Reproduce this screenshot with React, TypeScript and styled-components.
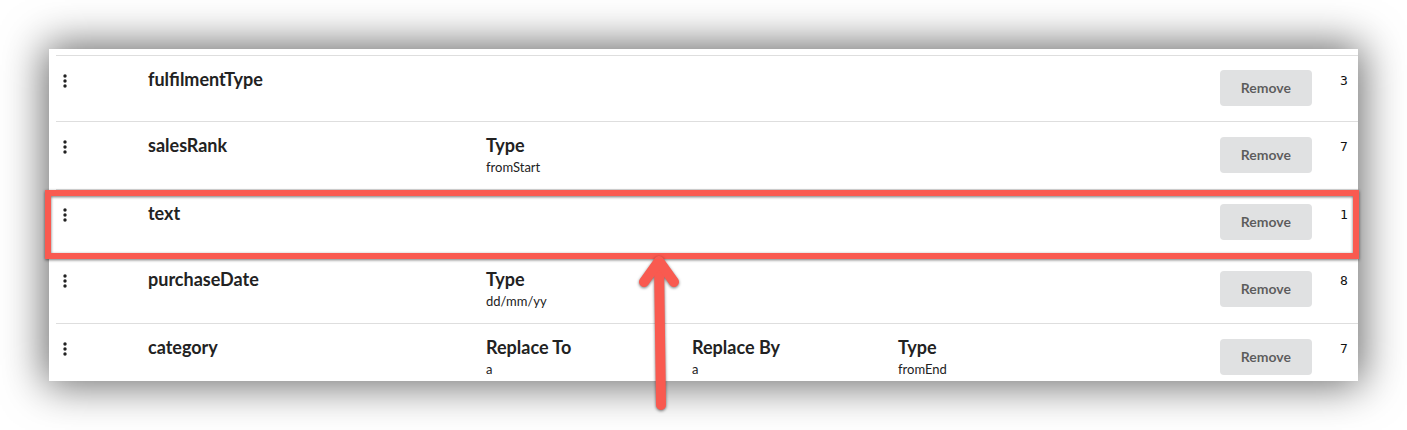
import React from "react";
import styled, { createGlobalStyle } from "styled-components";

const GlobalStyle = createGlobalStyle`
  html, body { margin: 0; padding: 0; background: #ffffff; }
  body { font-family: Lato, "Open Sans", Arial, sans-serif; color: rgba(0,0,0,0.87); }
  * { box-sizing: border-box; }
`;

const Page = styled.div`
  position: relative;
  width: 1407px;
  height: 430px;
  overflow: hidden;
  padding: 49px 0 0 49px;
`;

const Card = styled.div`
  width: 1309px;
  height: 332px;
  background: #ffffff;
  overflow: hidden;
  box-shadow: 0 0 40px 4px rgba(0, 0, 0, 0.6);
  padding: 6px 0 0 7px;
`;

const Table = styled.div`
  display: flex;
  flex-direction: column;
`;

const Row = styled.div<{ $tall?: boolean }>`
  display: grid;
  grid-template-columns: 86px 338px 1fr auto 46px;
  min-height: ${(p) => (p.$tall ? 68 : 66)}px;
  border-top: 1px solid #dedede;
  padding-left: 6px;
`;

const HandleCell = styled.div`
  padding-top: 18px;
  color: #222;
`;

const NameCell = styled.div`
  padding-top: 13px;
  font-size: 18px;
  font-weight: 700;
  line-height: 1.2;
  color: #222;
`;

const ParamsCell = styled.div`
  display: grid;
  grid-template-columns: repeat(auto-fill, 206px);
  align-content: start;
  padding-top: 13px;
`;

const Param = styled.div`
  display: flex;
  flex-direction: column;
`;

const ParamLabel = styled.div`
  font-size: 18px;
  font-weight: 700;
  line-height: 1.2;
  color: #222;
`;

const ParamValue = styled.div`
  margin-top: 3px;
  font-size: 13px;
  line-height: 1.2;
  color: #222;
`;

const ButtonCell = styled.div`
  display: flex;
  align-items: center;
  padding-bottom: 1px;
`;

const RemoveButton = styled.button`
  font-family: Lato, "Open Sans", Arial, sans-serif;
  font-size: 14px;
  font-weight: 700;
  line-height: 1;
  height: 36px;
  padding: 0 21px;
  border: none;
  border-radius: 4px;
  background: #e0e1e2;
  color: rgba(0, 0, 0, 0.6);
  cursor: pointer;
`;

const NumberCell = styled.div`
  padding: 16px 0 0 28px;
  font-family: "DejaVu Sans Mono", "Liberation Mono", monospace;
  font-size: 13px;
  line-height: 18px;
  color: #111;
`;

const Highlight = styled.div`
  position: absolute;
  left: 45px;
  top: 190px;
  width: 1314px;
  height: 69px;
  border: 6px solid #f95a50;
  filter: drop-shadow(0 1px 1.5px rgba(0, 0, 0, 0.55));
  pointer-events: none;
`;

const ArrowLayer = styled.svg`
  position: absolute;
  left: 0;
  top: 0;
  width: 1407px;
  height: 430px;
  pointer-events: none;
  filter: drop-shadow(0 1px 1.5px rgba(0, 0, 0, 0.55));
`;

const Kebab = () => (
  <svg width="6" height="16" viewBox="0 0 6 16">
    <circle cx="3" cy="2" r="1.7" fill="currentColor" />
    <circle cx="3" cy="7" r="1.7" fill="currentColor" />
    <circle cx="3" cy="12" r="1.7" fill="currentColor" />
  </svg>
);

type P = { label: string; value: string };
type R = { name: string; params: P[]; n: number };

const rows: R[] = [
  { name: "fulfilmentType", params: [], n: 3 },
  { name: "salesRank", params: [{ label: "Type", value: "fromStart" }], n: 7 },
  { name: "text", params: [], n: 1 },
  { name: "purchaseDate", params: [{ label: "Type", value: "dd/mm/yy" }], n: 8 },
  {
    name: "category",
    params: [
      { label: "Replace To", value: "a" },
      { label: "Replace By", value: "a" },
      { label: "Type", value: "fromEnd" },
    ],
    n: 7,
  },
];

export default function App() {
  return (
    <>
      <GlobalStyle />
      <Page>
        <Card>
          <Table>
            {rows.map((r) => (
              <Row key={r.name} $tall={r.params.length > 0}>
                <HandleCell>
                  <Kebab />
                </HandleCell>
                <NameCell>{r.name}</NameCell>
                <ParamsCell>
                  {r.params.map((p, i) => (
                    <Param key={i}>
                      <ParamLabel>{p.label}</ParamLabel>
                      <ParamValue>{p.value}</ParamValue>
                    </Param>
                  ))}
                </ParamsCell>
                <ButtonCell>
                  <RemoveButton>Remove</RemoveButton>
                </ButtonCell>
                <NumberCell>{r.n}</NumberCell>
              </Row>
            ))}
          </Table>
        </Card>
        <Highlight />
        <ArrowLayer viewBox="0 0 1407 430">
          <g stroke="#f95a50" strokeWidth="10" strokeLinecap="round" strokeLinejoin="round" fill="none">
            <path d="M661 405 L659 262" />
            <path d="M644 282 L659 261 L674 282" />
          </g>
        </ArrowLayer>
      </Page>
    </>
  );
}
